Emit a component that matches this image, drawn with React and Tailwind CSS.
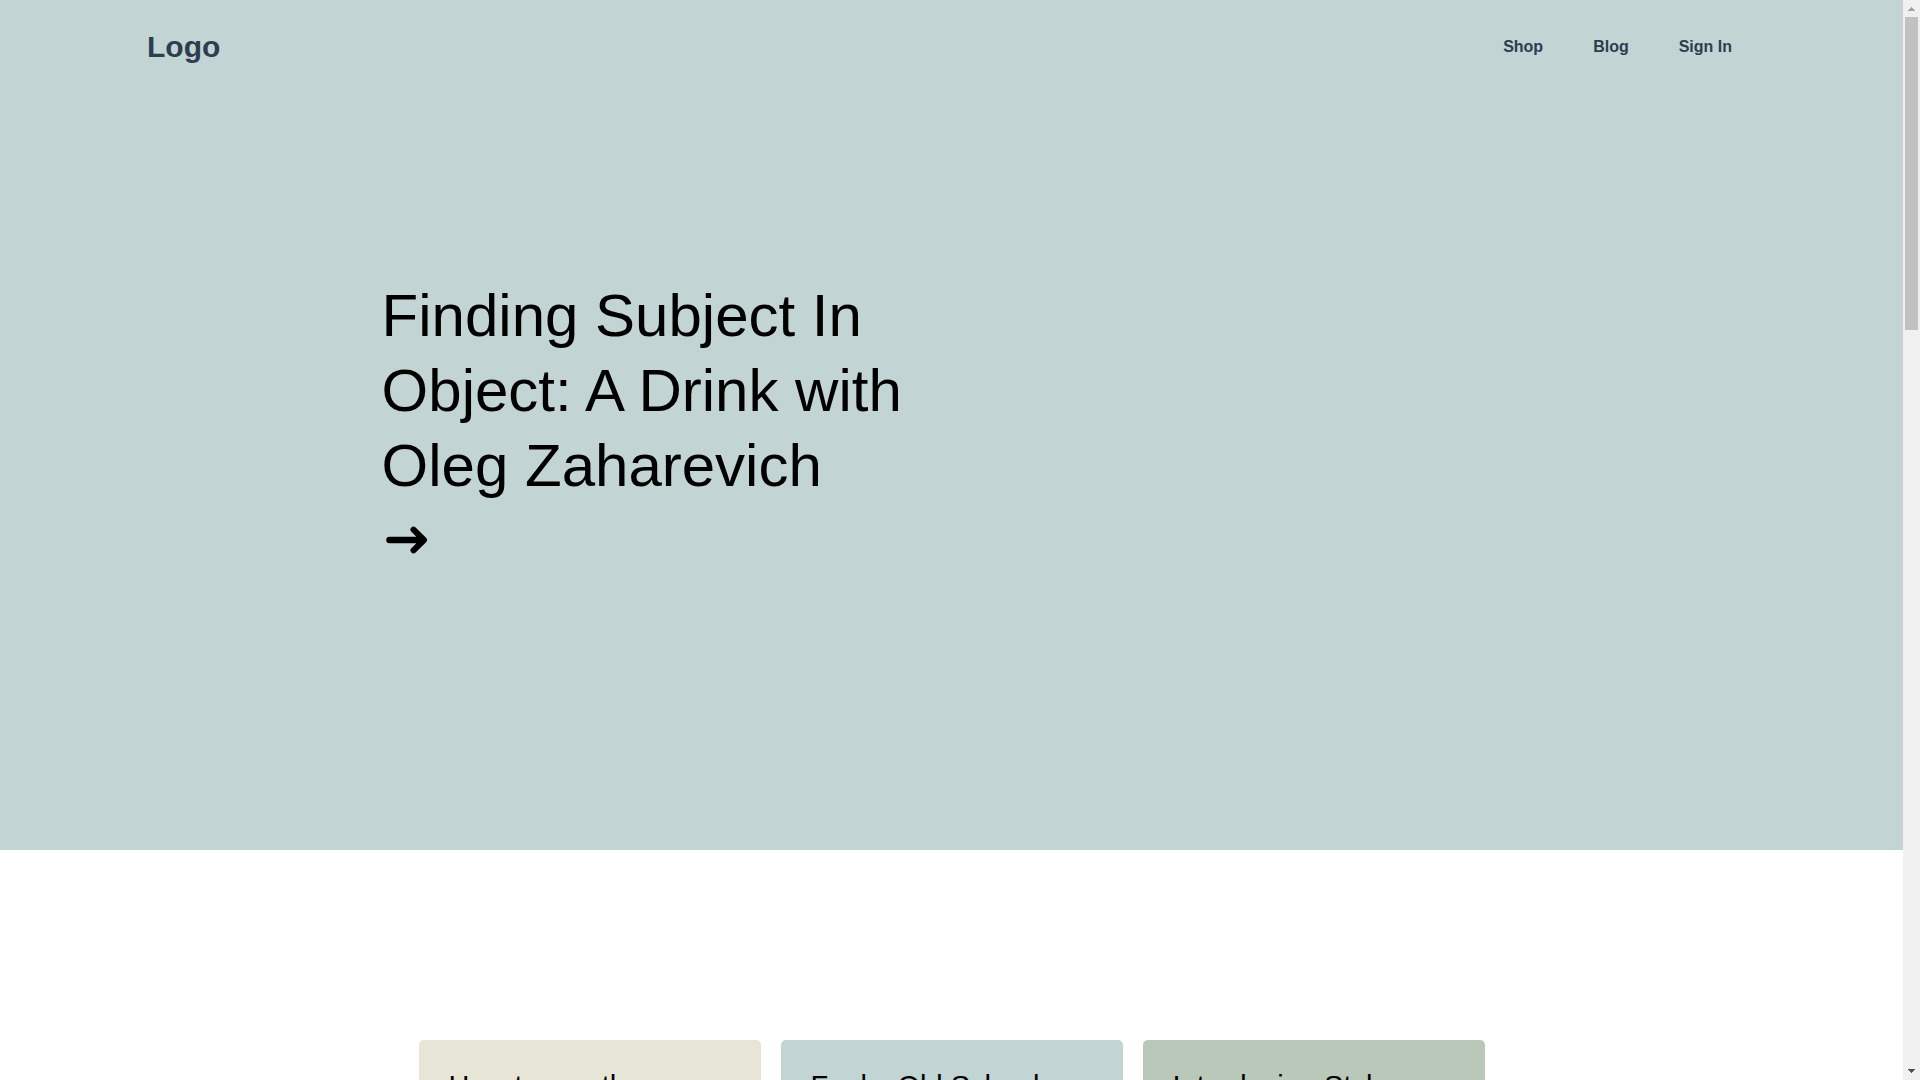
const links = ['Shop', 'Blog', 'Sign In'];

const posts = [
  { title: 'How to use the', tone: 'bg-[#e7e5d6]' },
  { title: 'Funky Old School', tone: 'bg-[#c2d4d3]' },
  { title: 'Introducing Style', tone: 'bg-[#bac8ba]' },
];

function Header() {
  return (
    <header className="ml-[147px] mr-[146px] flex h-[92px] items-center justify-between text-[#2c3e50]">
      <a href="#home" className="text-[30px] font-bold">Logo</a>
      <nav className="flex pt-0.5">
        {links.map((label) => (
          <a key={label} href="#nav" className="px-[25px] text-base font-bold">{label}</a>
        ))}
      </nav>
    </header>
  );
}

function Hero() {
  return (
    <section className="h-[850px] shrink-0 bg-[#c2d4d3]">
      <Header />
      <div className="ml-[20%] w-[30%] pl-px pt-[186px]">
        <h1 className="text-[60px] leading-[75px] text-black">
          Finding Subject In Object: A Drink with Oleg Zaharevich
        </h1>
        <a href="#story" aria-label="Read the story" className="flex h-[75px] items-center pl-1">
          <svg width="44" height="30" viewBox="0 0 44 30" fill="none" stroke="#000" strokeLinecap="round" strokeLinejoin="round">
            <path d="M3.500 14H34" strokeWidth="6.500" />
            <path d="M27.500 3.700L38 14L27.500 24.300" strokeWidth="6" />
            <path d="M31 10L39.500 14L31 18Z" fill="#000" strokeWidth="1" />
          </svg>
        </a>
      </div>
    </section>
  );
}

function Posts() {
  return (
    <section className="mx-auto grid w-[1066px] max-w-full grid-cols-3 gap-5 pt-[190px]">
      {posts.map((post) => (
        <article key={post.title} className={`h-[400px] rounded-[5px] px-[30px] pt-[28px] ${post.tone}`}>
          <h2 className="whitespace-nowrap text-[29px] leading-[36px] text-black">{post.title}</h2>
        </article>
      ))}
    </section>
  );
}

function ScrollBar() {
  return (
    <div aria-hidden="true" className="flex w-[17px] shrink-0 flex-col items-center bg-[#f0f0f0]">
      <svg className="h-[17px] w-[17px] shrink-0" viewBox="0 0 17 17" fill="#a3a3a3" shapeRendering="crispEdges">
        <path d="M8 7h1v1h1v1h1v1h1v1H5v-1h1V9h1V8h1z" />
      </svg>
      <div className="h-[313px] w-[13px] bg-[#c1c1c1]" />
      <svg className="mt-auto h-[17px] w-[17px] shrink-0" viewBox="0 0 17 17" fill="#505050" shapeRendering="crispEdges">
        <path d="M5 6h7v1h-1v1h-1v1H9v1H8V9H7V8H6V7H5z" />
      </svg>
    </div>
  );
}

export default function App() {
  return (
    <div className="flex h-screen overflow-hidden bg-white font-['Liberation_Sans',Arial,sans-serif]">
      <main className="flex min-w-0 flex-1 flex-col overflow-hidden">
        <Hero />
        <Posts />
      </main>
      <ScrollBar />
    </div>
  );
}
